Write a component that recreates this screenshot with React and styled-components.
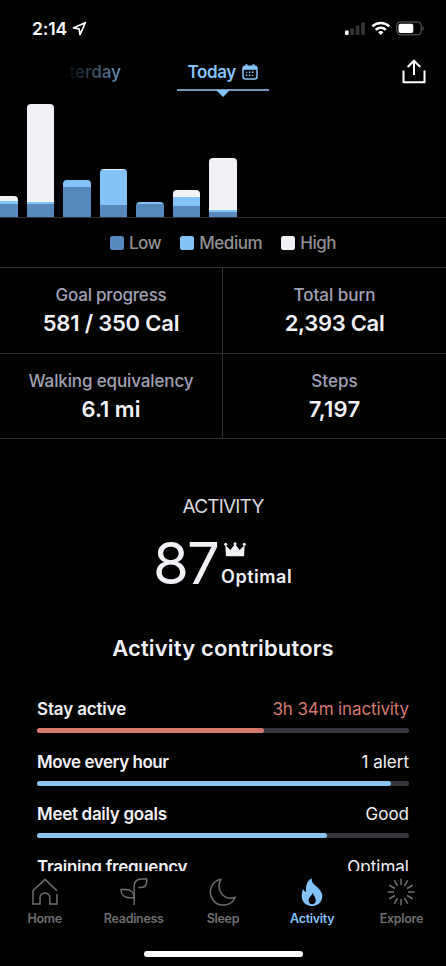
import React from 'react';
import styled, { createGlobalStyle } from 'styled-components';

const bars = [
  { high: 4.5, medium: 3, low: 13.5 },
  { high: 98.5, medium: 2, low: 13 },
  { high: 0, medium: 7, low: 30.5 },
  { high: 1.5, medium: 34.5, low: 12.5 },
  { high: 0, medium: 1.5, low: 13.5 },
  { high: 7, medium: 8.5, low: 11.5 },
  { high: 52, medium: 2, low: 5.5 },
];

const stats = [
  { label: 'Goal progress', value: '581 / 350 Cal', ls: -0.2, vls: -0.2 },
  { label: 'Total burn', value: '2,393 Cal', ls: 0, vls: -0.3 },
  { label: 'Walking equivalency', value: '6.1 mi', ls: -0.13, vls: 0 },
  { label: 'Steps', value: '7,197', ls: 0, vls: 0.2 },
];

const contributors = [
  { name: 'Stay active', result: '3h 34m inactivity', percent: 61, alert: true, ls: -0.15 },
  { name: 'Move every hour', result: '1 alert', percent: 95.2, ls: -0.45 },
  { name: 'Meet daily goals', result: 'Good', percent: 78, ls: -0.3 },
  { name: 'Training frequency', result: 'Optimal', percent: 90, ls: -0.28 },
];

const HomeIcon = () => (
  <svg width="28" height="28" viewBox="0 0 28 28" fill="none" stroke="currentColor" strokeWidth="1.5">
    <path d="M26 12.7 14 1.4 2 12.7V26h7v-6.2a4.9 4.9 0 0 1 9.8 0V26H26V16" />
  </svg>
);

const ReadinessIcon = () => (
  <svg width="28" height="28" viewBox="0 0 28 28" fill="none" stroke="currentColor" strokeWidth="1.5">
    <path d="M14.2 27V8.5c0-5 2.7-7.5 7.5-7.5h5v2.2c0 4.2-2.4 6.4-6.4 6.4h-1.8" />
    <path d="M14.2 19.8H9.4C4.6 19.8 1 16.8 1 11.6h4.5c4.8 0 8.7 2.8 8.7 8.2Z" />
  </svg>
);

const SleepIcon = () => (
  <svg width="28" height="28" viewBox="0 0 28 28" fill="none" stroke="currentColor" strokeWidth="1.5">
    <path d="M12 1.3A13 13 0 1 0 26.3 19.2C14.5 23.4 6.3 11.5 12 1.3Z" strokeLinejoin="round" />
  </svg>
);

const ActivityIcon = () => (
  <svg width="28" height="28" viewBox="0 0 28 28" fill="currentColor">
    <path
      fillRule="evenodd"
      d="M13.5.2c.5 5.5 2.7 6 5 8.2 2.7 2.8 5.8 5.2 5.8 9.7 0 6-4.400 10-10.300 10S3.700 23.900 3.700 17.800c0-2.500.6-4.600 1.300-6.700.8 1.600 1.800 2.600 3.100 2.900C7.400 8.400 8.800 3 13.500.2ZM14.700 14.500c-.4 3.300-4.100 4.700-4.100 8 0 2.200 1.500 3.700 3.500 3.700s3.700-1.500 3.700-3.800c0-2.900-2.300-4.700-3.100-7.900Z"
    />
  </svg>
);

const ExploreIcon = () => (
  <svg width="28" height="28" viewBox="0 0 28 28" fill="none" stroke="currentColor" strokeWidth="1.5">
    {Array.from({ length: 12 }, (_, i) => (
      <path key={i} d="M14 .5v6.5" transform={`rotate(${i * 30} 14 14)`} />
    ))}
  </svg>
);

const tabs = [
  { label: 'Home', Icon: HomeIcon },
  { label: 'Readiness', Icon: ReadinessIcon },
  { label: 'Sleep', Icon: SleepIcon },
  { label: 'Activity', Icon: ActivityIcon, active: true },
  { label: 'Explore', Icon: ExploreIcon },
];

const LocationIcon = () => (
  <svg width="15" height="15" viewBox="0 0 15 15" fill="none" stroke="#fff" strokeWidth="1.7" strokeLinejoin="round">
    <path d="M13.5 1.5 1.4 7l5.7.9.9 5.7Z" />
  </svg>
);

const StatusIcons = () => (
  <svg width="80" height="16" viewBox="0 0 80 16">
    <rect x="0" y="9.5" width="3.6" height="4.5" rx="1" fill="#fff" />
    <rect x="5.4" y="7.3" width="3.6" height="6.7" rx="1" fill="#353535" />
    <rect x="10.8" y="4.5" width="3.6" height="9.5" rx="1" fill="#353535" />
    <rect x="16.2" y="1.3" width="3.6" height="12.7" rx="1" fill="#353535" />
    <g fill="none" stroke="#fff" strokeWidth="2.5">
      <path d="M27.3 5.4a12.2 12.2 0 0 1 17 0" />
      <path d="M30.7 8.9a7.3 7.3 0 0 1 10.2 0" />
    </g>
    <path d="M35.8 14 33.1 11.2a3.9 3.9 0 0 1 5.4 0Z" fill="#fff" />
    <rect x="51.7" y="1" width="24.5" height="12.8" rx="3.6" fill="none" stroke="#696969" />
    <rect x="53.5" y="2.8" width="14.8" height="9.2" rx="2" fill="#fff" />
    <path d="M77.5 5.3c1.5.5 1.5 3.7 0 4.2Z" fill="#696969" />
  </svg>
);

const CalendarIcon = () => (
  <svg width="16" height="16" viewBox="0 0 16 16" fill="none" stroke="#84c3f8">
    <rect x="1" y="2.3" width="14" height="12.7" rx="2.5" strokeWidth="1.5" />
    <path d="M1 4.3h14" strokeWidth="3" />
    <path d="M4.5.3v3M11.5.3v3" strokeWidth="2" />
    <path d="M6.8 8.3h1.6M9.8 8.3h1.6M3.8 11.2h1.6M6.8 11.2h1.6" strokeWidth="1.5" />
    <path d="M3.8 8.3h1.6M9.8 11.2h1.6" strokeWidth="1.1" />
  </svg>
);

const ShareIcon = () => (
  <svg width="24" height="25" viewBox="0 0 24 25" fill="none" stroke="#fff" strokeWidth="2">
    <path d="M1.5 11.5v11.8h21V11.5" strokeLinejoin="round" />
    <path d="M12 16V1.8M5.7 8 12 1.7 18.3 8" />
  </svg>
);

const CrownIcon = () => (
  <svg width="22" height="15" viewBox="0 0 22 15" fill="#f2f2f6">
    <path d="M2 14.3 1.3 3 6.3 8 11 2l4.7 6L20.7 3 20 14.3Z" />
    <circle cx="1.7" cy="2.3" r="1.5" />
    <circle cx="11" cy="1.8" r="1.5" />
    <circle cx="20.3" cy="2.3" r="1.5" />
  </svg>
);

const App = () => {
  return (
    <>
      <GlobalStyle />
      <Screen>
        <StatusBar>
          <Time>2:14</Time>
          <LocationIcon />
          <StatusIcons />
        </StatusBar>
        <DayNav>
          <Yesterday>Yesterday</Yesterday>
          <Today>
            Today
            <CalendarIcon />
          </Today>
          <ShareIcon />
        </DayNav>
        <Chart>
          {bars.map((bar, i) => (
            <Bar key={i}>
              <Segment $color="#f1f2f5" $height={bar.high} />
              <Segment $color="#84c3f8" $height={bar.medium} />
              <Segment $color="#5688bc" $height={bar.low} />
            </Bar>
          ))}
        </Chart>
        <Legend>
          <LegendItem $color="#5688bc">Low</LegendItem>
          <LegendItem $color="#84c3f8">Medium</LegendItem>
          <LegendItem $color="#f1f2f5">High</LegendItem>
        </Legend>
        <Stats>
          {stats.map((stat) => (
            <Stat key={stat.label}>
              <StatLabel $ls={stat.ls}>{stat.label}</StatLabel>
              <StatValue $ls={stat.vls}>{stat.value}</StatValue>
            </Stat>
          ))}
        </Stats>
        <Score>
          <h2>ACTIVITY</h2>
          <div className="result">
            <span className="number">87</span>
            <div className="rating">
              <CrownIcon />
              <span>Optimal</span>
            </div>
          </div>
        </Score>
        <Contributors>
          <h3>Activity contributors</h3>
          {contributors.map((item) => (
            <Contributor key={item.name}>
              <Row $alert={item.alert} $ls={item.ls}>
                <strong>{item.name}</strong>
                <span>{item.result}</span>
              </Row>
              <Track>
                <Fill $alert={item.alert} style={{ width: `${item.percent}%` }} />
              </Track>
            </Contributor>
          ))}
        </Contributors>
        <TabBar>
          {tabs.map(({ label, Icon, active }) => (
            <Tab key={label} $active={active}>
              <Icon />
              {label}
            </Tab>
          ))}
        </TabBar>
        <HomeIndicator />
      </Screen>
    </>
  );
};

const GlobalStyle = createGlobalStyle`
  * {
    box-sizing: border-box;
  }
  body {
    margin: 0;
    background: #000;
  }
  h2,
  h3 {
    margin: 0;
  }
  svg {
    display: block;
    flex-shrink: 0;
  }
`;

const Screen = styled.main`
  display: flex;
  flex-direction: column;
  width: 446px;
  height: 966px;
  overflow: hidden;
  background: #000;
  color: #f2f2f6;
  font-family: Inter, sans-serif;
`;

const StatusBar = styled.header`
  display: flex;
  flex-shrink: 0;
  align-items: center;
  height: 57px;
  padding: 0 21px 0 32px;
  svg:last-child {
    margin-left: auto;
  }
`;

const Time = styled.span`
  width: 40px;
  color: #fff;
  font-size: 17.5px;
  font-weight: 600;
  letter-spacing: -0.1px;
`;

const DayNav = styled.nav`
  display: grid;
  grid-template-columns: 121px 56px 92px 1fr;
  flex-shrink: 0;
  height: 47px;
  font-size: 17px;
  font-weight: 600;
  line-height: 31px;
  > svg {
    margin: 2px 20px 0 auto;
  }
`;

const Yesterday = styled.span`
  justify-self: end;
  background: linear-gradient(90deg, #000 30%, #5e88ad 100%);
  background-clip: text;
  color: transparent;
  font-weight: 600;
  letter-spacing: -0.1px;
`;

const Today = styled.div`
  display: flex;
  position: relative;
  grid-column: 3;
  justify-content: space-between;
  align-items: center;
  height: 34px;
  padding: 0 11px 2px 10.5px;
  border-bottom: 2px solid #7593b9;
  color: #84c3f8;
  letter-spacing: -0.4px;

  &::after {
    content: '';
    position: absolute;
    top: 33px;
    left: 38.5px;
    border: 7.5px solid transparent;
    border-top-color: #84c3f8;
    border-bottom: 0;
  }
`;

const Chart = styled.section`
  display: flex;
  align-items: flex-end;
  flex-shrink: 0;
  gap: 9px;
  height: 114px;
  margin-left: -10px;
  border-bottom: 1px solid #303034;
`;

const Bar = styled.div`
  width: 27.5px;
  overflow: hidden;
  border-radius: 4px 4px 0 0;
`;

const Segment = styled.div`
  height: ${({ $height }) => $height}px;
  background: ${({ $color }) => $color};
`;

const Legend = styled.div`
  display: flex;
  flex-shrink: 0;
  justify-content: center;
  align-items: center;
  gap: 19px;
  height: 49px;
  color: #929294;
  font-size: 17px;
  font-weight: 500;
  letter-spacing: -0.45px;
`;

const LegendItem = styled.span`
  display: flex;
  align-items: center;
  gap: 5px;
  &::before {
    content: '';
    width: 14px;
    height: 14px;
    border-radius: 2.5px;
    background: ${({ $color }) => $color};
  }
`;

const Stats = styled.section`
  display: grid;
  grid-template-columns: 223px 223px;
  grid-template-rows: 86px 85px;
  flex-shrink: 0;
  border-top: 1px solid #303034;
`;

const Stat = styled.div`
  padding-top: 17px;
  border-bottom: 1px solid #303034;
  text-align: center;
  &:nth-child(odd) {
    border-right: 1px solid #303034;
  }
`;

const StatLabel = styled.div`
  color: #a1a1b3;
  font-size: 17px;
  font-weight: 500;
  line-height: 20px;
  letter-spacing: ${({ $ls }) => $ls}px;
`;

const StatValue = styled.div`
  margin-top: 5px;
  font-size: 22px;
  font-weight: 600;
  line-height: 26px;
  letter-spacing: ${({ $ls }) => $ls}px;
`;

const Score = styled.section`
  flex-shrink: 0;
  height: 197px;
  padding-top: 56px;
  h2 {
    font-size: 19px;
    font-weight: 400;
    line-height: 24px;
    letter-spacing: -0.8px;
    text-align: center;
    color: #d9d9dd;
  }
  .result {
    display: flex;
    margin: 14px 0 0 153px;
  }
  .number {
    width: 68px;
    font-size: 58px;
    line-height: 60px;
    letter-spacing: -2px;
  }
  .rating {
    padding-top: 9px;
    font-size: 18px;
    font-weight: 600;
    line-height: 24px;
    letter-spacing: 0.55px;
    svg {
      margin: 0 0 8px 3px;
    }
  }
`;

const Contributors = styled.section`
  height: 235px;
  overflow: hidden;
  flex-shrink: 0;
  padding: 0 37px;
  h3 {
    margin-bottom: 38px;
    font-size: 22px;
    font-weight: 600;
    line-height: 24px;
    letter-spacing: 0.15px;
    text-align: center;
  }
`;

const Contributor = styled.div`
  height: 52.7px;
`;

const Row = styled.div`
  display: flex;
  justify-content: space-between;
  font-size: 17px;
  line-height: 22px;
  strong {
    font-weight: 600;
    letter-spacing: ${({ $ls }) => $ls}px;
  }
  span {
    color: ${({ $alert }) => ($alert ? '#d5786e' : '#f2f2f6')};
    letter-spacing: ${({ $alert }) => ($alert ? -0.13 : 0)}px;
  }
`;

const Track = styled.div`
  height: 5px;
  margin-top: 8px;
  border-radius: 3px;
  background: #36363c;
`;

const Fill = styled.div`
  height: 5px;
  border-radius: 3px;
  background: ${({ $alert }) => ($alert ? '#d5786e' : '#8ac3f0')};
`;

const TabBar = styled.nav`
  display: grid;
  grid-template-columns: repeat(5, 89.2px);
  flex-shrink: 0;
  height: 80px;
  padding-top: 7px;
`;

const Tab = styled.div`
  display: flex;
  flex-direction: column;
  align-items: center;
  gap: 5px;
  color: ${({ $active }) => ($active ? '#84c3f8' : '#6e6e70')};
  font-size: 12.5px;
  font-weight: 600;
  line-height: 16px;
  letter-spacing: -0.3px;
`;

const HomeIndicator = styled.div`
  flex-shrink: 0;
  align-self: center;
  width: 159px;
  height: 6px;
  border-radius: 3px;
  background: #fff;
`;

export default App;
